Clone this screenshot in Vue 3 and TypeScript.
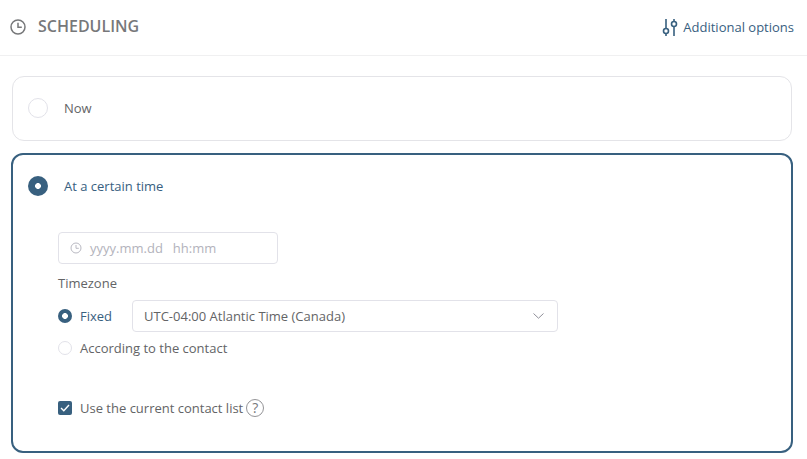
<script setup lang="ts">
const timezone = 'UTC-04:00 Atlantic Time (Canada)'
</script>

<template>
  <div class="page">
    <header class="header">
      <div class="title">
        <svg class="title-icon" width="16" height="16" viewBox="0 0 16 16" fill="none">
          <circle cx="8" cy="8" r="7" stroke="#77787a" stroke-width="1.5" />
          <path d="M8 3.8V8.3H11.8" stroke="#77787a" stroke-width="1.5" />
        </svg>
        <h1>SCHEDULING</h1>
      </div>
      <a class="options">
        <svg width="16" height="20" viewBox="0 0 16 20" fill="none" stroke="#38607f" stroke-width="1.6">
          <path d="M4 2V11.5M4 16.5V19M12 2V4.5M12 9.5V19" />
          <circle cx="4" cy="14" r="2.5" />
          <circle cx="12" cy="7" r="2.5" />
        </svg>
        <span>Additional options</span>
      </a>
    </header>

    <main class="content">
      <section class="card">
        <div class="row">
          <span class="radio large"></span>
          <span class="label muted">Now</span>
        </div>
      </section>

      <section class="card active">
        <div class="row">
          <span class="radio large checked"></span>
          <span class="label selected">At a certain time</span>
        </div>

        <div class="body">
          <div class="date-input">
            <svg width="12" height="12" viewBox="0 0 12 12" fill="none" stroke="#b9b9c2">
              <circle cx="6" cy="6" r="5" />
              <path d="M6 3V6.3H8.8" />
            </svg>
            <span>yyyy.mm.dd</span>
            <span class="time">hh:mm</span>
          </div>

          <div class="group-title">Timezone</div>

          <div class="tz-row">
            <span class="radio small checked"></span>
            <span class="selected fixed">Fixed</span>
            <div class="select">
              <span>{{ timezone }}</span>
              <svg width="11" height="6" viewBox="0 0 11 6" fill="none" stroke="#8f8f98">
                <path d="M.5.5 5.5 5.2 10.5.5" />
              </svg>
            </div>
          </div>

          <div class="contact-row">
            <span class="radio small"></span>
            <span class="muted">According to the contact</span>
          </div>

          <div class="check-row">
            <span class="checkbox">
              <svg width="10" height="8" viewBox="0 0 10 8" fill="none" stroke="#fff" stroke-width="1.4">
                <path d="M1 4 3.8 6.7 9 1" />
              </svg>
            </span>
            <span class="muted">Use the current contact list</span>
            <span class="help">?</span>
          </div>
        </div>
      </section>
    </main>
  </div>
</template>

<style scoped>
.page {
  width: 807px;
  height: 459px;
  overflow: hidden;
  background: #fff;
  font-family: 'Open Sans', sans-serif;
  font-size: 13px;
  color: #636466;
}

.header {
  height: 52px;
  box-sizing: content-box;
  display: flex;
  align-items: center;
  justify-content: space-between;
  padding: 0 13px 3px 10px;
  border-bottom: 1px solid #f0f0f1;
}

.title {
  display: flex;
  align-items: center;
  gap: 12px;
}

.title-icon {
  margin-top: 1px;
}

.title h1 {
  margin: 0;
  font-size: 16px;
  font-weight: 600;
  line-height: 22px;
  color: #77787a;
}

.options {
  display: flex;
  align-items: center;
  gap: 5px;
  margin-top: 2px;
  color: #38607f;
}

.content {
  padding: 20px 14px 0 11px;
  display: flex;
  flex-direction: column;
  gap: 12px;
}

.card {
  margin: 0 1px;
  border: 1px solid #e4e4e8;
  border-radius: 12px;
  padding: 0 15px;
}

.card .row {
  height: 62px;
  padding-bottom: 1px;
  display: flex;
  align-items: center;
  gap: 16px;
}

.card.active {
  margin: 0;
  padding: 0 15px;
  border: 2px solid #38607f;
  height: 300px;
  box-sizing: border-box;
}

.card.active .row {
  height: 62px;
  padding-bottom: 0;
}

.radio {
  display: block;
  box-sizing: border-box;
  flex: none;
  border-radius: 50%;
  border: 1px solid #e2e2e9;
  background: #fff;
}

.radio.large {
  width: 20px;
  height: 20px;
}

.radio.small {
  width: 14px;
  height: 14px;
}

.radio.checked {
  border: 0;
  background: radial-gradient(circle, #fff 0 2.6px, #38607f 3.2px);
}

.muted {
  color: #636466;
}

.selected {
  color: #38607f;
}

.body {
  padding: 15px 0 0 30px;
}

.date-input {
  width: 220px;
  height: 32px;
  box-sizing: border-box;
  border: 1px solid #e2e2e9;
  border-radius: 4px;
  display: flex;
  align-items: center;
  padding-left: 11px;
  color: #b3b3bc;
}

.date-input span {
  margin-left: 8px;
}

.date-input .time {
  margin-left: 10px;
}

.group-title {
  margin-top: 10px;
  line-height: 18px;
}

.tz-row {
  margin-top: 8px;
  display: flex;
  align-items: center;
}

.fixed {
  margin-left: 8px;
  width: 52px;
}

.select {
  width: 426px;
  height: 32px;
  box-sizing: border-box;
  border: 1px solid #e2e2e9;
  border-radius: 4px;
  display: flex;
  align-items: center;
  justify-content: space-between;
  padding: 0 13px 0 11px;
}

.contact-row {
  margin-top: 7px;
  display: flex;
  align-items: center;
  gap: 8px;
  line-height: 18px;
}

.check-row {
  margin-top: 41px;
  display: flex;
  align-items: center;
  line-height: 20px;
}

.checkbox {
  width: 14px;
  height: 14px;
  margin-right: 8px;
  border-radius: 2px;
  background: #38607f;
  display: flex;
  align-items: center;
  justify-content: center;
}

.help {
  width: 18px;
  height: 18px;
  margin-left: 3px;
  box-sizing: border-box;
  border: 1px solid #949497;
  border-radius: 50%;
  display: flex;
  align-items: center;
  justify-content: center;
  font-size: 14px;
  color: #77787a;
}
</style>
